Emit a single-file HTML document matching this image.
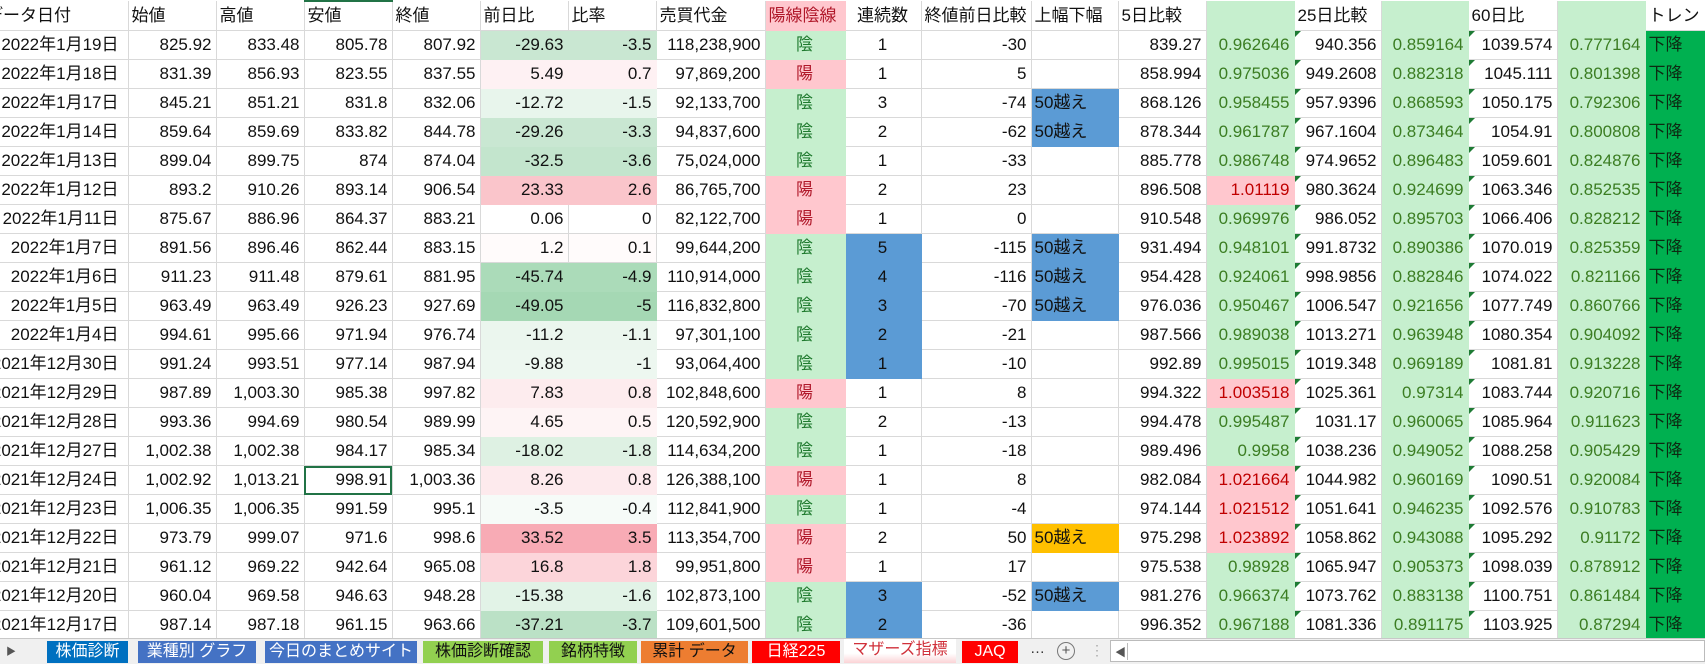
<!DOCTYPE html>
<html><head><meta charset="utf-8">
<style>
body{margin:0;width:1705px;height:663px;overflow:hidden;background:#fff;font-family:"Liberation Sans","Noto Sans CJK JP",sans-serif;font-size:17px;color:#111;}
table{border-collapse:collapse;table-layout:fixed;width:1705px;position:absolute;top:0;left:0;}
td{height:28px;padding:0 4px 0 3px;border-right:1px solid #d9d9d9;border-bottom:1px solid #d9d9d9;white-space:nowrap;overflow:hidden;text-align:right;line-height:28px;box-sizing:border-box;}
td.d{padding:0;}
td.d div{display:flex;justify-content:flex-end;padding-right:9px;}
tr.h td{text-align:left;}
.c{text-align:center!important;}
.l{text-align:left!important;}
.yin{background:#c6efce;color:#1f7a2e;border-color:#c6efce;text-align:center;}
.yang{background:#ffc7ce;color:#b0182a;border-color:#ffc7ce;text-align:center;}
.bl{background:#5b9bd5;border-color:#5b9bd5;}
.or{background:#ffc000;border-color:#ffc000;}
.gr{background:#c6efce;color:#3b7d22;border-color:#c6efce;}
.pk{background:#ffc7ce;color:#c00000;border-color:#ffc7ce;}
.tr{background:#00b050;border-color:#00b050;text-align:left;color:#0d2a12;}
.t{position:relative;}
.t:before{content:"";position:absolute;left:0;top:0;border-top:6px solid #1e7b34;border-right:6px solid transparent;}
.sel{outline:2px solid #217346;outline-offset:-2px;}
#tabs{position:absolute;left:0;top:638px;width:1705px;height:25px;background:#f0f0f0;border-top:1px solid #c8c8c8;}
.tab{position:absolute;top:2px;height:22px;line-height:22px;font-size:16px;text-align:center;color:#fff;}
</style></head><body>
<table>
<colgroup><col style="width:128px"><col style="width:88px"><col style="width:88px"><col style="width:88px"><col style="width:88px"><col style="width:88px"><col style="width:88px"><col style="width:109px"><col style="width:80px"><col style="width:76px"><col style="width:110px"><col style="width:87px"><col style="width:88px"><col style="width:88px"><col style="width:87px"><col style="width:87px"><col style="width:89px"><col style="width:88px"><col style="width:60px"></colgroup>
<tr class="h"><td style="padding-left:0"><span style="margin-left:-14px">データ日付</span></td><td>始値</td><td>高値</td><td style="border-top:2px solid #217346">安値</td><td>終値</td><td>前日比</td><td>比率</td><td>売買代金</td><td class="yang" style="text-align:left">陽線陰線</td><td class="c">連続数</td><td>終値前日比較</td><td>上幅下幅</td><td>5日比較</td><td class="gr"></td><td>25日比較</td><td class="gr"></td><td>60日比</td><td class="gr"></td><td>トレン</td></tr>
<tr><td class="d"><div>2022年1月19日</div></td><td>825.92</td><td>833.48</td><td>805.78</td><td>807.92</td><td style="background:#c9e7d2;border-color:#c9e7d2">-29.63</td><td style="background:#c9e7d2;border-color:#c9e7d2">-3.5</td><td>118,238,900</td><td class="yin">陰</td><td class="c">1</td><td>-30</td><td></td><td>839.27</td><td class="gr">0.962646</td><td class="t">940.356</td><td class="gr">0.859164</td><td class="t">1039.574</td><td class="gr">0.777164</td><td class="tr">下降</td></tr>
<tr><td class="d"><div>2022年1月18日</div></td><td>831.39</td><td>856.93</td><td>823.55</td><td>837.55</td><td style="background:#fef1f3;border-color:#fef1f3">5.49</td><td style="background:#fef1f3;border-color:#fef1f3">0.7</td><td>97,869,200</td><td class="yang">陽</td><td class="c">1</td><td>5</td><td></td><td>858.994</td><td class="gr">0.975036</td><td class="t">949.2608</td><td class="gr">0.882318</td><td class="t">1045.111</td><td class="gr">0.801398</td><td class="tr">下降</td></tr>
<tr><td class="d"><div>2022年1月17日</div></td><td>845.21</td><td>851.21</td><td>831.8</td><td>832.06</td><td style="background:#e8f5ec;border-color:#e8f5ec">-12.72</td><td style="background:#e8f5ec;border-color:#e8f5ec">-1.5</td><td>92,133,700</td><td class="yin">陰</td><td class="c">3</td><td>-74</td><td class="bl l">50越え</td><td>868.126</td><td class="gr">0.958455</td><td class="t">957.9396</td><td class="gr">0.868593</td><td class="t">1050.175</td><td class="gr">0.792306</td><td class="tr">下降</td></tr>
<tr><td class="d"><div>2022年1月14日</div></td><td>859.64</td><td>859.69</td><td>833.82</td><td>844.78</td><td style="background:#c9e7d2;border-color:#c9e7d2">-29.26</td><td style="background:#c9e7d2;border-color:#c9e7d2">-3.3</td><td>94,837,600</td><td class="yin">陰</td><td class="c">2</td><td>-62</td><td class="bl l">50越え</td><td>878.344</td><td class="gr">0.961787</td><td class="t">967.1604</td><td class="gr">0.873464</td><td class="t">1054.91</td><td class="gr">0.800808</td><td class="tr">下降</td></tr>
<tr><td class="d"><div>2022年1月13日</div></td><td>899.04</td><td>899.75</td><td>874</td><td>874.04</td><td style="background:#c3e5cd;border-color:#c3e5cd">-32.5</td><td style="background:#c3e5cd;border-color:#c3e5cd">-3.6</td><td>75,024,000</td><td class="yin">陰</td><td class="c">1</td><td>-33</td><td></td><td>885.778</td><td class="gr">0.986748</td><td class="t">974.9652</td><td class="gr">0.896483</td><td class="t">1059.601</td><td class="gr">0.824876</td><td class="tr">下降</td></tr>
<tr><td class="d"><div>2022年1月12日</div></td><td>893.2</td><td>910.26</td><td>893.14</td><td>906.54</td><td style="background:#fac5cb;border-color:#fac5cb">23.33</td><td style="background:#fac5cb;border-color:#fac5cb">2.6</td><td>86,765,700</td><td class="yang">陽</td><td class="c">2</td><td>23</td><td></td><td>896.508</td><td class="pk">1.01119</td><td class="t">980.3624</td><td class="gr">0.924699</td><td class="t">1063.346</td><td class="gr">0.852535</td><td class="tr">下降</td></tr>
<tr><td class="d"><div>2022年1月11日</div></td><td>875.67</td><td>886.96</td><td>864.37</td><td>883.21</td><td>0.06</td><td>0</td><td>82,122,700</td><td class="yang">陽</td><td class="c">1</td><td>0</td><td></td><td>910.548</td><td class="gr">0.969976</td><td class="t">986.052</td><td class="gr">0.895703</td><td class="t">1066.406</td><td class="gr">0.828212</td><td class="tr">下降</td></tr>
<tr><td class="d"><div>2022年1月7日</div></td><td>891.56</td><td>896.46</td><td>862.44</td><td>883.15</td><td style="background:#fffbfb">1.2</td><td style="background:#fffbfb">0.1</td><td>99,644,200</td><td class="yin">陰</td><td class="c bl">5</td><td>-115</td><td class="bl l">50越え</td><td>931.494</td><td class="gr">0.948101</td><td class="t">991.8732</td><td class="gr">0.890386</td><td class="t">1070.019</td><td class="gr">0.825359</td><td class="tr">下降</td></tr>
<tr><td class="d"><div>2022年1月6日</div></td><td>911.23</td><td>911.48</td><td>879.61</td><td>881.95</td><td style="background:#abdbb9;border-color:#abdbb9">-45.74</td><td style="background:#abdbb9;border-color:#abdbb9">-4.9</td><td>110,914,000</td><td class="yin">陰</td><td class="c bl">4</td><td>-116</td><td class="bl l">50越え</td><td>954.428</td><td class="gr">0.924061</td><td class="t">998.9856</td><td class="gr">0.882846</td><td class="t">1074.022</td><td class="gr">0.821166</td><td class="tr">下降</td></tr>
<tr><td class="d"><div>2022年1月5日</div></td><td>963.49</td><td>963.49</td><td>926.23</td><td>927.69</td><td style="background:#a5d8b4;border-color:#a5d8b4">-49.05</td><td style="background:#a5d8b4;border-color:#a5d8b4">-5</td><td>116,832,800</td><td class="yin">陰</td><td class="c bl">3</td><td>-70</td><td class="bl l">50越え</td><td>976.036</td><td class="gr">0.950467</td><td class="t">1006.547</td><td class="gr">0.921656</td><td class="t">1077.749</td><td class="gr">0.860766</td><td class="tr">下降</td></tr>
<tr><td class="d"><div>2022年1月4日</div></td><td>994.61</td><td>995.66</td><td>971.94</td><td>976.74</td><td style="background:#ebf6ee;border-color:#ebf6ee">-11.2</td><td style="background:#ebf6ee;border-color:#ebf6ee">-1.1</td><td>97,301,100</td><td class="yin">陰</td><td class="c bl">2</td><td>-21</td><td></td><td>987.566</td><td class="gr">0.989038</td><td class="t">1013.271</td><td class="gr">0.963948</td><td class="t">1080.354</td><td class="gr">0.904092</td><td class="tr">下降</td></tr>
<tr><td class="d"><div>2021年12月30日</div></td><td>991.24</td><td>993.51</td><td>977.14</td><td>987.94</td><td style="background:#edf7f0;border-color:#edf7f0">-9.88</td><td style="background:#edf7f0;border-color:#edf7f0">-1</td><td>93,064,400</td><td class="yin">陰</td><td class="c bl">1</td><td>-10</td><td></td><td>992.89</td><td class="gr">0.995015</td><td class="t">1019.348</td><td class="gr">0.969189</td><td class="t">1081.81</td><td class="gr">0.913228</td><td class="tr">下降</td></tr>
<tr><td class="d"><div>2021年12月29日</div></td><td>987.89</td><td>1,003.30</td><td>985.38</td><td>997.82</td><td style="background:#fdecee;border-color:#fdecee">7.83</td><td style="background:#fdecee;border-color:#fdecee">0.8</td><td>102,848,600</td><td class="yang">陽</td><td class="c">1</td><td>8</td><td></td><td>994.322</td><td class="pk">1.003518</td><td class="t">1025.361</td><td class="gr">0.97314</td><td class="t">1083.744</td><td class="gr">0.920716</td><td class="tr">下降</td></tr>
<tr><td class="d"><div>2021年12月28日</div></td><td>993.36</td><td>994.69</td><td>980.54</td><td>989.99</td><td style="background:#fef4f5;border-color:#fef4f5">4.65</td><td style="background:#fef4f5;border-color:#fef4f5">0.5</td><td>120,592,900</td><td class="yin">陰</td><td class="c">2</td><td>-13</td><td></td><td>994.478</td><td class="gr">0.995487</td><td class="t">1031.17</td><td class="gr">0.960065</td><td class="t">1085.964</td><td class="gr">0.911623</td><td class="tr">下降</td></tr>
<tr><td class="d"><div>2021年12月27日</div></td><td>1,002.38</td><td>1,002.38</td><td>984.17</td><td>985.34</td><td style="background:#def1e3;border-color:#def1e3">-18.02</td><td style="background:#def1e3;border-color:#def1e3">-1.8</td><td>114,634,200</td><td class="yin">陰</td><td class="c">1</td><td>-18</td><td></td><td>989.496</td><td class="gr">0.9958</td><td class="t">1038.236</td><td class="gr">0.949052</td><td class="t">1088.258</td><td class="gr">0.905429</td><td class="tr">下降</td></tr>
<tr><td class="d"><div>2021年12月24日</div></td><td>1,002.92</td><td>1,013.21</td><td class="sel">998.91</td><td>1,003.36</td><td style="background:#fdeaed;border-color:#fdeaed">8.26</td><td style="background:#fdeaed;border-color:#fdeaed">0.8</td><td>126,388,100</td><td class="yang">陽</td><td class="c">1</td><td>8</td><td></td><td>982.084</td><td class="pk">1.021664</td><td class="t">1044.982</td><td class="gr">0.960169</td><td class="t">1090.51</td><td class="gr">0.920084</td><td class="tr">下降</td></tr>
<tr><td class="d"><div>2021年12月23日</div></td><td>1,006.35</td><td>1,006.35</td><td>991.59</td><td>995.1</td><td style="background:#f6fbf8;border-color:#f6fbf8">-3.5</td><td style="background:#f6fbf8;border-color:#f6fbf8">-0.4</td><td>112,841,900</td><td class="yin">陰</td><td class="c">1</td><td>-4</td><td></td><td>974.144</td><td class="pk">1.021512</td><td class="t">1051.641</td><td class="gr">0.946235</td><td class="t">1092.576</td><td class="gr">0.910783</td><td class="tr">下降</td></tr>
<tr><td class="d"><div>2021年12月22日</div></td><td>973.79</td><td>999.07</td><td>971.6</td><td>998.6</td><td style="background:#f8abb5;border-color:#f8abb5">33.52</td><td style="background:#f8abb5;border-color:#f8abb5">3.5</td><td>113,354,700</td><td class="yang">陽</td><td class="c">2</td><td>50</td><td class="or l">50越え</td><td>975.298</td><td class="pk">1.023892</td><td class="t">1058.862</td><td class="gr">0.943088</td><td class="t">1095.292</td><td class="gr">0.91172</td><td class="tr">下降</td></tr>
<tr><td class="d"><div>2021年12月21日</div></td><td>961.12</td><td>969.22</td><td>942.64</td><td>965.08</td><td style="background:#fcd5da;border-color:#fcd5da">16.8</td><td style="background:#fcd5da;border-color:#fcd5da">1.8</td><td>99,951,800</td><td class="yang">陽</td><td class="c">1</td><td>17</td><td></td><td>975.538</td><td class="gr">0.98928</td><td class="t">1065.947</td><td class="gr">0.905373</td><td class="t">1098.039</td><td class="gr">0.878912</td><td class="tr">下降</td></tr>
<tr><td class="d"><div>2021年12月20日</div></td><td>960.04</td><td>969.58</td><td>946.63</td><td>948.28</td><td style="background:#e2f3e7;border-color:#e2f3e7">-15.38</td><td style="background:#e2f3e7;border-color:#e2f3e7">-1.6</td><td>102,873,100</td><td class="yin">陰</td><td class="c bl">3</td><td>-52</td><td class="bl l">50越え</td><td>981.276</td><td class="gr">0.966374</td><td class="t">1073.762</td><td class="gr">0.883138</td><td class="t">1100.751</td><td class="gr">0.861484</td><td class="tr">下降</td></tr>
<tr><td class="d"><div>2021年12月17日</div></td><td>987.14</td><td>987.18</td><td>961.15</td><td>963.66</td><td style="background:#bbe1c6;border-color:#bbe1c6">-37.21</td><td style="background:#bbe1c6;border-color:#bbe1c6">-3.7</td><td>109,601,500</td><td class="yin">陰</td><td class="c bl">2</td><td>-36</td><td></td><td>996.352</td><td class="gr">0.967188</td><td class="t">1081.336</td><td class="gr">0.891175</td><td class="t">1103.925</td><td class="gr">0.87294</td><td class="tr">下降</td></tr>
</table>
<div id="tabs">
<div style="position:absolute;left:6px;top:4px;font-size:10px;color:#555">▶</div>
<div class="tab" style="left:47px;width:81px;background:#0070c0">株価診断</div>
<div class="tab" style="left:138px;width:118px;background:#4472c4">業種別 グラフ</div>
<div class="tab" style="left:265px;width:152px;background:#4472c4">今日のまとめサイト</div>
<div class="tab" style="left:423px;width:120px;background:#92d050;color:#111">株価診断確認</div>
<div class="tab" style="left:549px;width:88px;background:#92d050;color:#111">銘柄特徴</div>
<div class="tab" style="left:641px;width:107px;background:#ed7d31;color:#111">累計 データ</div>
<div class="tab" style="left:752px;width:88px;background:#ff0000">日経225</div>
<div class="tab" style="left:844px;top:0;height:24px;width:112px;background:linear-gradient(#fff 60%,#fbd3d6);color:#d0303a">マザーズ指標</div>
<div class="tab" style="left:962px;width:56px;background:#ff0000">JAQ</div>
<div style="position:absolute;left:1030px;top:1px;font-size:15px;color:#333">…</div>
<div style="position:absolute;left:1057px;top:3px;width:16px;height:16px;border:1px solid #777;border-radius:50%;font-size:15px;line-height:16px;text-align:center;color:#555">+</div>
<div style="position:absolute;left:1090px;top:3px;font-size:14px;color:#aaa">⋮</div>
<div style="position:absolute;left:1110px;top:1px;width:595px;height:22px;background:#fff;border:1px solid #bbb;box-sizing:border-box"><span style="position:absolute;left:4px;top:3px;font-size:11px;color:#555">◀</span><span style="position:absolute;left:16px;top:2px;width:1px;height:17px;background:#bbb"></span></div>
</div>
</body></html>
